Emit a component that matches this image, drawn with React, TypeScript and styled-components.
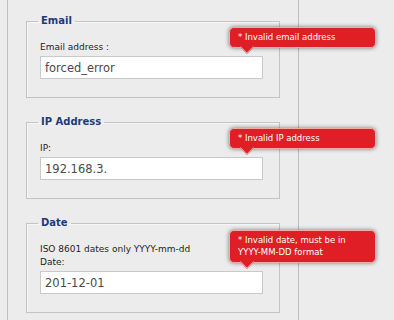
import React from 'react';
import styled, {createGlobalStyle} from 'styled-components';

const GlobalStyle = createGlobalStyle`
  html, body {
    margin: 0;
    padding: 0;
    background: #ececec;
  }
  body {
    font-family: "DejaVu Sans", Verdana, sans-serif;
  }
`;

const Panel = styled.div`
  margin-left: 7px;
  width: 290px;
  height: 320px;
  box-sizing: content-box;
  padding: 15px 0 0 0;
  border-left: 1px solid #bdbdbd;
  border-right: 1px solid #bdbdbd;
  background: #ececec;
`;

const Group = styled.fieldset`
  margin: 0 0 18px 18px;
  width: 254px;
  box-sizing: border-box;
  padding: 14px 16px 18px 13px;
  border: 1px solid #c3c3c3;
  box-shadow: inset 1px 1px 0 #f6f6f6;
  min-width: 0;
`;

const Legend = styled.legend`
  margin-left: -2px;
  padding: 0 3px;
  font-size: 10px;
  line-height: 12px;
  font-weight: bold;
  color: #1d3b78;
`;

const Label = styled.label`
  display: block;
  margin-bottom: 2px;
  font-size: 9px;
  line-height: 13px;
  color: #1e1e1e;
`;

const Field = styled.div`
  position: relative;
`;

const TextInput = styled.input`
  display: block;
  width: 223px;
  height: 23px;
  box-sizing: border-box;
  margin: 0;
  padding: 0 4px;
  border: 1px solid #c9c9c9;
  background: #fff;
  font-family: "DejaVu Sans", Verdana, sans-serif;
  font-size: 11.5px;
  color: #4a4a4a;
  outline: none;
`;

const ErrorTip = styled.div`
  position: absolute;
  left: 189px;
  bottom: calc(100% + 8px);
  width: 147px;
  box-sizing: border-box;
  padding: 4px 8px;
  border: 1px solid #f2a9a9;
  border-radius: 5px;
  background: #e01e26;
  box-shadow: 0 0 4px rgba(0, 0, 0, 0.5);
  color: #fff;
  font-size: 8.5px;
  line-height: 11.5px;
  z-index: 2;

  &::after {
    content: '';
    position: absolute;
    left: 12px;
    bottom: -5px;
    width: 9px;
    height: 9px;
    background: #e01e26;
    border-right: 1px solid #f2a9a9;
    border-bottom: 1px solid #f2a9a9;
    transform: rotate(45deg);
  }
`;

type FormFieldProps = {
  legend: string;
  label: React.ReactNode;
  value: string;
  error: React.ReactNode;
};

const FormField: React.FC<FormFieldProps> = ({legend, label, value, error}) => (
  <Group>
    <Legend>{legend}</Legend>
    <Label>{label}</Label>
    <Field>
      <TextInput type="text" defaultValue={value} />
      <ErrorTip>{error}</ErrorTip>
    </Field>
  </Group>
);

export default function App() {
  return (
    <>
      <GlobalStyle />
      <Panel>
        <FormField
          legend="Email"
          label="Email address :"
          value="forced_error"
          error="* Invalid email address"
        />
        <FormField
          legend="IP Address"
          label="IP:"
          value="192.168.3."
          error="* Invalid IP address"
        />
        <FormField
          legend="Date"
          label={
            <>
              ISO 8601 dates only YYYY-mm-dd
              <br />
              Date:
            </>
          }
          value="201-12-01"
          error={
            <>
              * Invalid date, must be in
              <br />
              YYYY-MM-DD format
            </>
          }
        />
      </Panel>
    </>
  );
}
